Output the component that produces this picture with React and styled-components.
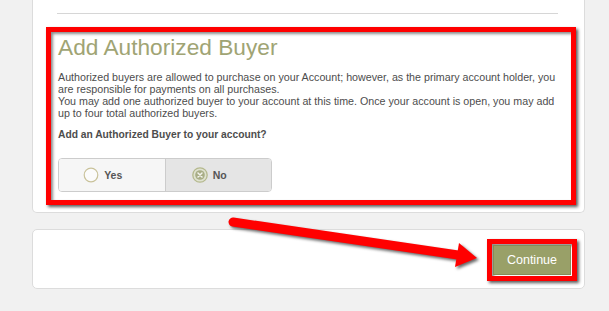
import React, { useState } from "react";
import styled, { createGlobalStyle } from "styled-components";

const GlobalStyle = createGlobalStyle`
  html, body {
    margin: 0;
    padding: 0;
    background-color: #f1f1f1;
    font-family: "Liberation Sans", Arial, sans-serif;
  }
`;

export default function App() {
  const [choice, setChoice] = useState("no");

  return (
    <>
      <GlobalStyle />
      <Page>
        <TopCard>
          <Divider />
          <Highlight>
            <Title>Add Authorized Buyer</Title>
            <Text>
              Authorized buyers are allowed to purchase on your Account; however, as the primary account holder, you
              are responsible for payments on all purchases.
              <br />
              You may add one authorized buyer to your account at this time. Once your account is open, you may add
              up to four total authorized buyers.
            </Text>
            <Question>Add an Authorized Buyer to your account?</Question>
            <Segment>
              <Option selected={choice === "yes"} onClick={() => setChoice("yes")}>
                {choice === "yes" ? <CheckedRadio /> : <EmptyRadio />}
                Yes
              </Option>
              <Option selected={choice === "no"} onClick={() => setChoice("no")}>
                {choice === "no" ? <CheckedRadio /> : <EmptyRadio />}
                No
              </Option>
            </Segment>
          </Highlight>
        </TopCard>

        <BottomCard>
          <ButtonFrame>
            <ContinueBtn>Continue</ContinueBtn>
          </ButtonFrame>
        </BottomCard>

        <Arrow viewBox="0 0 609 311">
          <path
            d="M233 222 L458 255"
            stroke="#ff0000"
            strokeWidth="9"
            strokeLinecap="round"
            fill="none"
          />
          <polygon points="455,267 477,258 459,243" fill="#ff0000" />
        </Arrow>
      </Page>
    </>
  );
}

function EmptyRadio() {
  return (
    <RadioIcon viewBox="0 0 16 16">
      <circle cx="8" cy="8" r="6.8" fill="#fbfbfb" stroke="#c9c29a" strokeWidth="1.2" />
    </RadioIcon>
  );
}

function CheckedRadio() {
  return (
    <RadioIcon viewBox="0 0 16 16">
      <circle cx="8" cy="8" r="7.2" fill="#dfe2d0" stroke="#b5b98e" strokeWidth="1.3" />
      <circle cx="8" cy="8" r="4.8" fill="#a8ad86" />
      <path d="M6 6 L10 10 M10 6 L6 10" stroke="#f4f4ee" strokeWidth="1.5" strokeLinecap="round" />
    </RadioIcon>
  );
}

const Page = styled.div`
  position: relative;
  width: 553px;
  padding-left: 32px;
`;

const TopCard = styled.div`
  background-color: #ffffff;
  border: 1px solid #dcdcdc;
  border-top: none;
  border-radius: 0 0 5px 5px;
  padding: 13px 8px 7px 13px;
`;

const Divider = styled.div`
  height: 1px;
  background-color: #d6d6d6;
  margin: 0 18px 13px 11px;
`;

const Highlight = styled.div`
  border: 5px solid #ff0000;
  padding: 2px 14px 8px 7px;
  box-shadow: 2px 2px 3px rgba(0, 0, 0, 0.65), inset 2px 2px 3px rgba(0, 0, 0, 0.45);
`;

const Title = styled.h1`
  margin: 0 0 11px 0;
  font-size: 22.7px;
  line-height: 26px;
  font-weight: 400;
  color: #a0a474;
`;

const Text = styled.p`
  margin: 0 0 10px 0;
  font-size: 10.7px;
  line-height: 12px;
  color: #4d4d4d;
`;

const Question = styled.p`
  margin: 0 0 17px 0;
  font-size: 10.25px;
  line-height: 12px;
  font-weight: 700;
  color: #4d4d4d;
`;

const Segment = styled.div`
  display: flex;
  width: 214px;
  height: 34px;
  border: 1px solid #cccccc;
  border-radius: 4px;
  box-sizing: border-box;
  overflow: hidden;
`;

const Option = styled.div`
  flex: 1;
  display: flex;
  align-items: center;
  justify-content: center;
  gap: 5px;
  padding-right: 18px;
  font-size: 10.5px;
  font-weight: 700;
  color: #555555;
  background-color: ${(p) => (p.selected ? "#e5e5e5" : "#f6f6f6")};
  cursor: pointer;
  & + & {
    border-left: 1px solid #cccccc;
  }
`;

const RadioIcon = styled.svg`
  width: 16px;
  height: 16px;
`;

const BottomCard = styled.div`
  margin-top: 16px;
  height: 56px;
  background-color: #ffffff;
  border: 1px solid #dcdcdc;
  border-radius: 5px;
  display: flex;
  justify-content: flex-end;
  align-items: center;
  padding: 2px 7px 0 0;
  box-sizing: content-box;
`;

const ButtonFrame = styled.div`
  border: 5px solid #ff0000;
  padding: 1px;
  box-shadow: 2px 2px 3px rgba(0, 0, 0, 0.65), inset 2px 2px 3px rgba(0, 0, 0, 0.45);
`;

const ContinueBtn = styled.button`
  display: block;
  width: 78px;
  height: 30px;
  border: 1px solid #868c58;
  background-color: #99a068;
  color: #ffffff;
  font-family: "Liberation Sans", Arial, sans-serif;
  font-size: 12.5px;
  padding: 0;
  cursor: pointer;
`;

const Arrow = styled.svg`
  position: absolute;
  left: 0;
  top: 0;
  width: 609px;
  height: 311px;
  pointer-events: none;
  filter: drop-shadow(2px 2px 1.5px rgba(0, 0, 0, 0.6));
`;
